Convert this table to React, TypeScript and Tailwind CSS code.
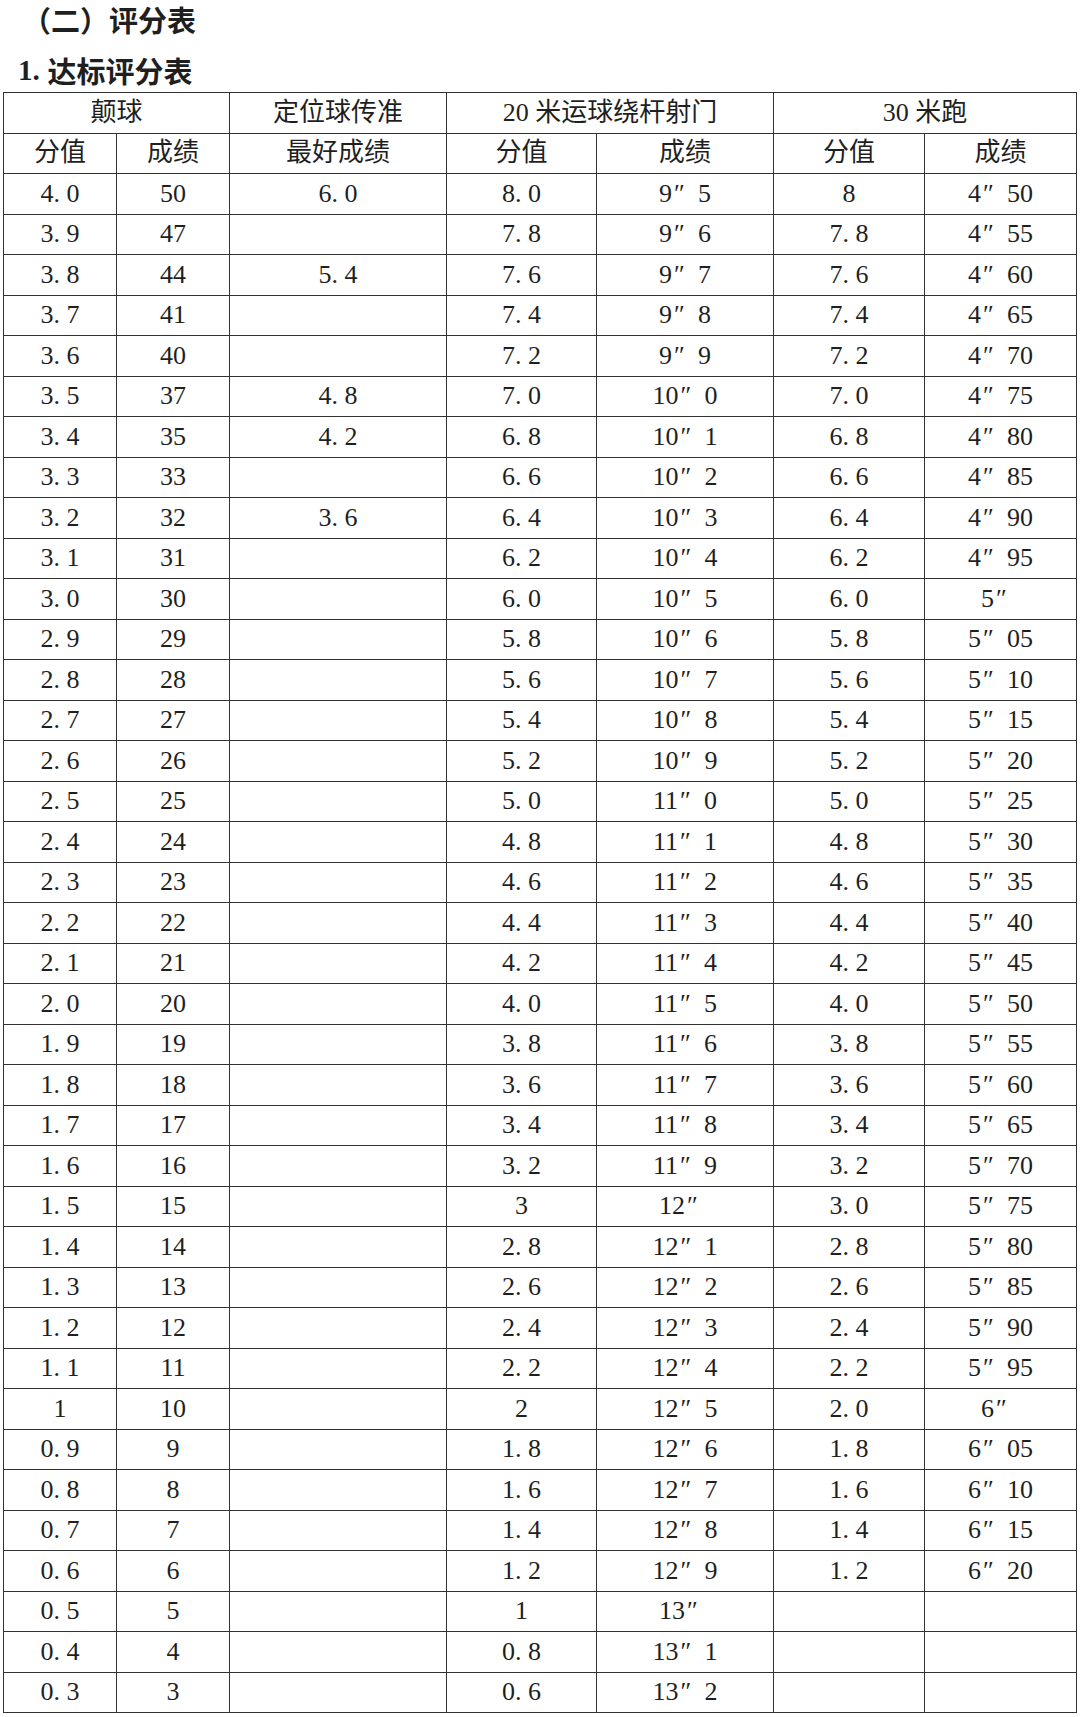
const rows = `
4.0 50 6.0 8.0 9″5 8 4″50
3.9 47 - 7.8 9″6 7.8 4″55
3.8 44 5.4 7.6 9″7 7.6 4″60
3.7 41 - 7.4 9″8 7.4 4″65
3.6 40 - 7.2 9″9 7.2 4″70
3.5 37 4.8 7.0 10″0 7.0 4″75
3.4 35 4.2 6.8 10″1 6.8 4″80
3.3 33 - 6.6 10″2 6.6 4″85
3.2 32 3.6 6.4 10″3 6.4 4″90
3.1 31 - 6.2 10″4 6.2 4″95
3.0 30 - 6.0 10″5 6.0 5″
2.9 29 - 5.8 10″6 5.8 5″05
2.8 28 - 5.6 10″7 5.6 5″10
2.7 27 - 5.4 10″8 5.4 5″15
2.6 26 - 5.2 10″9 5.2 5″20
2.5 25 - 5.0 11″0 5.0 5″25
2.4 24 - 4.8 11″1 4.8 5″30
2.3 23 - 4.6 11″2 4.6 5″35
2.2 22 - 4.4 11″3 4.4 5″40
2.1 21 - 4.2 11″4 4.2 5″45
2.0 20 - 4.0 11″5 4.0 5″50
1.9 19 - 3.8 11″6 3.8 5″55
1.8 18 - 3.6 11″7 3.6 5″60
1.7 17 - 3.4 11″8 3.4 5″65
1.6 16 - 3.2 11″9 3.2 5″70
1.5 15 - 3 12″ 3.0 5″75
1.4 14 - 2.8 12″1 2.8 5″80
1.3 13 - 2.6 12″2 2.6 5″85
1.2 12 - 2.4 12″3 2.4 5″90
1.1 11 - 2.2 12″4 2.2 5″95
1 10 - 2 12″5 2.0 6″
0.9 9 - 1.8 12″6 1.8 6″05
0.8 8 - 1.6 12″7 1.6 6″10
0.7 7 - 1.4 12″8 1.4 6″15
0.6 6 - 1.2 12″9 1.2 6″20
0.5 5 - 1 13″ - -
0.4 4 - 0.8 13″1 - -
0.3 3 - 0.6 13″2 - -
`
  .trim()
  .split("\n")
  .map((line) => line.split(" ").map((v) => (v === "-" ? "" : v)));

// SimSun-like spacing: half-width period, full-width double prime
function Value({ v }: { v: string }) {
  return (
    <>
      {v.split("").map((ch, i) =>
        ch === "." ? (
          <span key={i} className="inline-block w-[13px] text-left">.</span>
        ) : ch === "″" ? (
          <span key={i} className="inline-block w-[26px] pl-[2px] text-left">″</span>
        ) : (
          <span key={i}>{ch}</span>
        )
      )}
    </>
  );
}

const cell = "border border-[#333] p-0 text-center align-middle whitespace-nowrap font-normal";

export default function App() {
  return (
    <div className="w-[1080px] min-h-[1717px] bg-white text-[#1f1f1f] font-['Liberation_Serif','Noto_Sans_CJK_SC',serif]">
      <h2 className="flex h-[40px] items-center pl-[22px] text-[29px] font-bold font-['Noto_Sans_CJK_SC',sans-serif]">（二）评分表</h2>
      <h3 className="mt-[10px] flex h-[42px] items-center pl-[18px] text-[29px] font-bold">
        <span>1</span>
        <span className="inline-block w-[15px]">.</span>
        <span className="font-['Noto_Sans_CJK_SC',sans-serif]">达标评分表</span>
      </h3>
      <table className="ml-[3px] w-[1073px] table-fixed border-collapse text-[26px] leading-none">
        <colgroup>
          <col className="w-[113px]" />
          <col className="w-[113px]" />
          <col className="w-[217px]" />
          <col className="w-[150px]" />
          <col className="w-[177px]" />
          <col className="w-[151px]" />
          <col className="w-[152px]" />
        </colgroup>
        <thead>
          <tr className="h-[40.5px]">
            <th colSpan={2} className={cell}>颠球</th>
            <th className={cell}>定位球传准</th>
            <th colSpan={2} className={cell}>20 米运球绕杆射门</th>
            <th colSpan={2} className={cell}>30 米跑</th>
          </tr>
          <tr className="h-[40.5px]">
            <th className={cell}>分值</th>
            <th className={cell}>成绩</th>
            <th className={cell}>最好成绩</th>
            <th className={cell}>分值</th>
            <th className={cell}>成绩</th>
            <th className={cell}>分值</th>
            <th className={cell}>成绩</th>
          </tr>
        </thead>
        <tbody>
          {rows.map((r, i) => (
            <tr key={i} className="h-[40.5px]">
              {r.map((v, j) => (
                <td key={j} className={cell}>
                  <Value v={v} />
                </td>
              ))}
            </tr>
          ))}
        </tbody>
      </table>
    </div>
  );
}
